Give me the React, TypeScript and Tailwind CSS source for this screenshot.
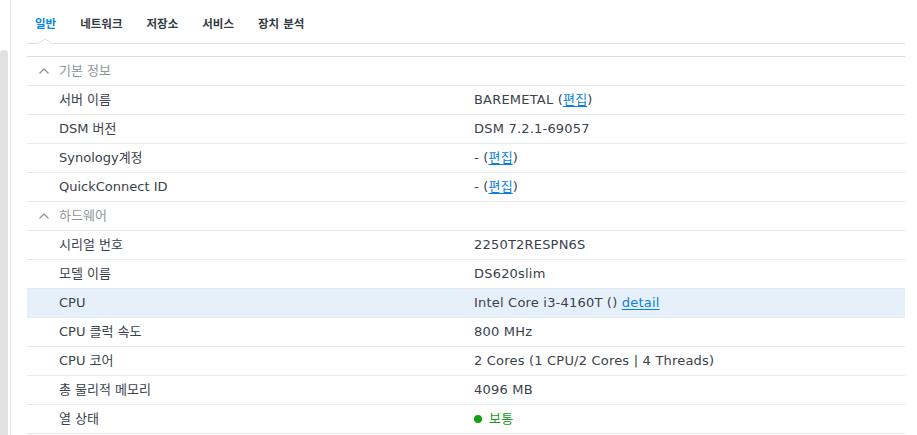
import React from 'react';

type Row = { label: string; value: React.ReactNode; highlight?: boolean };
type Section = { title: string; rows: Row[] };

const FONT = { fontFamily: '"DejaVu Sans", "Noto Sans CJK KR", sans-serif' };

function EditLink() {
  return <span className="text-[#0a7fe0] underline underline-offset-2">편집</span>;
}

const sections: Section[] = [
  {
    title: '기본 정보',
    rows: [
      { label: '서버 이름', value: <>BAREMETAL (<EditLink />)</> },
      { label: 'DSM 버전', value: 'DSM 7.2.1-69057' },
      { label: 'Synology계정', value: <>- (<EditLink />)</> },
      { label: 'QuickConnect ID', value: <>- (<EditLink />)</> },
    ],
  },
  {
    title: '하드웨어',
    rows: [
      { label: '시리얼 번호', value: '2250T2RESPN6S' },
      { label: '모델 이름', value: 'DS620slim' },
      {
        label: 'CPU',
        highlight: true,
        value: (
          <>
            Intel Core i3-4160T (){' '}
            <span className="text-[#0a7fe0] underline underline-offset-2">detail</span>
          </>
        ),
      },
      { label: 'CPU 클럭 속도', value: '800 MHz' },
      { label: 'CPU 코어', value: '2 Cores (1 CPU/2 Cores | 4 Threads)' },
      { label: '총 물리적 메모리', value: '4096 MB' },
      {
        label: '열 상태',
        value: (
          <span className="flex items-center gap-[7px] text-[#1a9a1a]">
            <span className="inline-block h-[8px] w-[8px] rounded-full bg-[#12a012]" />
            보통
          </span>
        ),
      },
    ],
  },
];

const tabs = ['일반', '네트워크', '저장소', '서비스', '장치 분석'];

function Chevron() {
  return (
    <svg width="12" height="8" viewBox="0 0 12 8" className="text-[#8e959d]">
      <path d="M1.5 6.5L6 2L10.5 6.5" fill="none" stroke="currentColor" strokeWidth="1.3" />
    </svg>
  );
}

export default function App() {
  return (
    <div className="flex h-[435px] w-[917px] overflow-hidden bg-white text-[13px] text-[#3a424b]" style={FONT}>
      {/* scrollbar + divider */}
      <div className="flex w-[11px] shrink-0">
        <div className="mt-[50px] w-[8px] rounded-t-[4px] bg-[#e1e1e1]" />
        <div className="ml-[2px] w-px bg-[#dfe6ee]" />
      </div>

      <div className="flex-1 pl-[16px] pr-[12px]">
        {/* tabs */}
        <div className="relative flex h-[44px] items-center gap-[24px] border-b border-[#d6dee6] pl-[8px] pt-[7px] text-[11.5px] font-bold">
          {tabs.map((t, i) => (
            <span key={t} className={i === 0 ? 'text-[#0a86e6]' : 'text-[#333a42]'}>
              {t}
            </span>
          ))}
          <svg
            width="16"
            height="6"
            viewBox="0 0 16 6"
            className="absolute bottom-[-1px] left-[10px]"
          >
            <path d="M0 5.5H1L8 0.8L15 5.5H16" fill="white" stroke="#d6dee6" strokeWidth="1" />
            <rect x="1" y="5.2" width="14" height="1" fill="white" />
          </svg>
        </div>

        <div className="mt-[12px] border-t border-[#d6dee6]">
          {sections.map((s) => (
            <div key={s.title}>
              <div className="flex h-[29px] items-center border-b border-[#e6e9ee] text-[#8e959d]">
                <span className="flex w-[32px] justify-center pl-[1px]">
                  <Chevron />
                </span>
                <span>{s.title}</span>
              </div>
              {s.rows.map((r) => (
                <div
                  key={r.label}
                  className={`grid h-[29px] grid-cols-[447px_1fr] items-center border-b border-[#e6e9ee] ${
                    r.highlight ? 'bg-[#e6f0fb]' : ''
                  }`}
                >
                  <span className="pl-[32px]">{r.label}</span>
                  <span className="tracking-[0.2px]">{r.value}</span>
                </div>
              ))}
            </div>
          ))}
        </div>
      </div>
    </div>
  );
}
